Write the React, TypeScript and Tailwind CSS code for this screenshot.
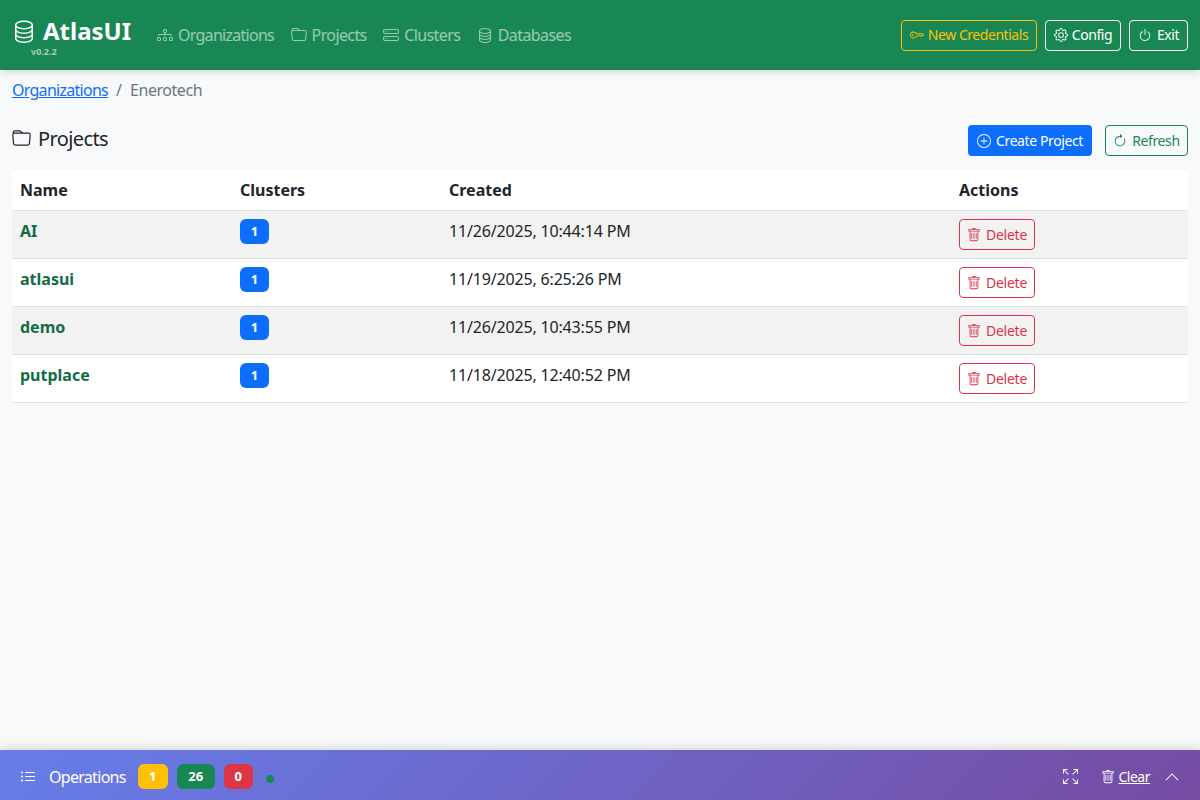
import {
  BsArrowClockwise,
  BsArrowsFullscreen,
  BsChevronUp,
  BsDatabase,
  BsDiagram3,
  BsFolder,
  BsGear,
  BsHddStack,
  BsKey,
  BsListUl,
  BsPlusCircle,
  BsPower,
  BsTrash,
} from 'react-icons/bs';

const NAV_ITEMS = [
  { label: 'Organizations', icon: BsDiagram3, className: 'tracking-[-0.72px]' },
  { label: 'Projects', icon: BsFolder, className: 'tracking-[-0.6px]' },
  { label: 'Clusters', icon: BsHddStack, className: 'tracking-[-0.6px]' },
  { label: 'Databases', icon: BsDatabase, className: 'tracking-[-0.6px]' },
];

const PROJECTS = [
  { name: 'AI', clusters: 1, created: '11/26/2025, 10:44:14 PM' },
  { name: 'atlasui', clusters: 1, created: '11/19/2025, 6:25:26 PM' },
  { name: 'demo', clusters: 1, created: '11/26/2025, 10:43:55 PM' },
  { name: 'putplace', clusters: 1, created: '11/18/2025, 12:40:52 PM' },
];

export default function App() {
  return (
    <div className="relative flex h-[800px] flex-col overflow-hidden bg-[#f8f9fa] font-['Noto_Sans',sans-serif] text-base text-[#212529]">
      <header className="relative z-10 flex h-[70px] shrink-0 items-center justify-between bg-[#198754] pr-3 pl-3 shadow-[0_2px_8px_rgba(0,0,0,0.15)]">
        <div className="flex items-center">
          <div className="flex w-[145px] flex-col">
            <div className="flex h-[30px] items-center gap-[7px] pt-1 text-white">
              <BsDatabase className="h-6 w-6" />
              <span className="text-2xl leading-none font-bold">AtlasUI</span>
            </div>
            <span className="mt-[3px] ml-[19px] text-[9px] leading-none font-bold text-white/60">v0.2.2</span>
          </div>
          <nav className="flex items-center gap-[16.5px] pb-[1px] text-white/55">
            {NAV_ITEMS.map(({ label, icon: Icon, className }) => (
              <a key={label} className="flex items-center gap-[5px]">
                <Icon className="h-4 w-4" />
                <span className={className}>{label}</span>
              </a>
            ))}
          </nav>
        </div>
        <div className="flex items-center gap-2 text-sm tracking-[-0.45px]">
          <button className="flex h-[31px] w-[136px] items-center justify-center gap-1 rounded border border-[#ffc107] text-[#ffc107]">
            <BsKey className="h-[14px] w-[14px]" />
            New Credentials
          </button>
          <button className="flex h-[31px] w-[76px] items-center justify-center gap-1 rounded border border-white text-white">
            <BsGear className="h-[14px] w-[14px]" />
            Config
          </button>
          <button className="flex h-[31px] w-[59px] items-center justify-center gap-[5px] rounded border border-white text-white">
            <BsPower className="h-[14px] w-[14px]" />
            Exit
          </button>
        </div>
      </header>

      <main className="flex-1 px-3">
        <div className="flex h-10 items-center text-[#6c757d]">
          <a className="tracking-[-0.72px] text-[#0d6efd] underline">Organizations</a>
          <span className="px-2">/</span>
          <span className="tracking-[-0.45px]">Enerotech</span>
        </div>

        <div className="mt-[15px] flex h-[31px] items-center justify-between">
          <h2 className="flex items-center gap-[7px] pb-1 text-xl leading-none tracking-[-0.6px]">
            <BsFolder className="h-[19px] w-[19px]" />
            Projects
          </h2>
          <div className="flex items-center gap-[13px] text-sm tracking-[-0.4px]">
            <button className="flex h-[31px] w-[124px] items-center justify-center gap-[5px] rounded bg-[#0d6efd] text-white">
              <BsPlusCircle className="h-[14px] w-[14px]" />
              Create Project
            </button>
            <button className="flex h-[31px] w-[83px] items-center justify-center gap-[5px] rounded border border-[#198754] text-[#198754]">
              <BsArrowClockwise className="h-[14px] w-[14px]" />
              Refresh
            </button>
          </div>
        </div>

        <table className="mt-[14px] w-full table-fixed bg-white">
          <thead>
            <tr className="h-10 border-b border-[#dee2e6] text-left font-bold">
              <th className="w-[220px] px-2">Name</th>
              <th className="w-[209px] px-2">Clusters</th>
              <th className="w-[510px] px-2">Created</th>
              <th className="px-2">Actions</th>
            </tr>
          </thead>
          <tbody>
            {PROJECTS.map((project, i) => (
              <tr key={project.name} className={`h-12 border-b border-[#dee2e6] ${i % 2 === 0 ? 'bg-[#f2f2f2]' : 'bg-white'}`}>
                <td className="px-2 pt-2 pb-[15px] align-top font-bold text-[#146c43]">{project.name}</td>
                <td className="px-2 pt-2 align-top">
                  <span className="flex h-[25px] w-[29px] items-center justify-center rounded-md bg-[#0d6efd] pt-[2px] text-[13px] font-bold text-white">
                    {project.clusters}
                  </span>
                </td>
                <td className="px-2 pt-2 align-top tracking-[-0.17px]">{project.created}</td>
                <td className="px-2 pt-2 align-top">
                  <button className="flex h-[31px] w-[76px] items-center justify-center gap-[5px] rounded border border-[#dc3545] pt-[2px] text-sm tracking-[-0.25px] text-[#dc3545]">
                    <BsTrash className="h-[14px] w-[14px]" />
                    Delete
                  </button>
                </td>
              </tr>
            ))}
          </tbody>
        </table>
      </main>

      <footer className="flex h-[50px] shrink-0 items-center justify-between bg-[linear-gradient(135deg,#667eea,#764ba2)] pt-[3px] pr-[19px] pl-5 text-white shadow-[0_-2px_10px_rgba(0,0,0,0.15)]">
        <div className="flex items-center">
          <BsListUl className="h-4 w-4" />
          <span className="ml-[13px] tracking-[-0.7px]">Operations</span>
          <span className="ml-3 flex h-[25px] w-[30px] items-center justify-center rounded-md bg-[#ffc107] text-[13px] font-bold">1</span>
          <span className="ml-[9px] flex h-[25px] w-[38px] items-center justify-center rounded-md bg-[#198754] text-[13px] font-bold">26</span>
          <span className="ml-[9px] flex h-[25px] w-[29px] items-center justify-center rounded-md bg-[#dc3545] text-[13px] font-bold">0</span>
          <span className="mt-[5px] ml-[13px] h-2 w-2 rounded-full bg-[#198754]" />
        </div>
        <div className="flex items-center text-sm tracking-[-0.5px]">
          <BsArrowsFullscreen className="h-[15px] w-[15px]" />
          <a className="ml-[23px] flex items-center gap-1 underline">
            <BsTrash className="h-[14px] w-[14px]" />
            Clear
          </a>
          <BsChevronUp className="mr-[1px] ml-[14px] h-4 w-4" />
        </div>
      </footer>
    </div>
  );
}
